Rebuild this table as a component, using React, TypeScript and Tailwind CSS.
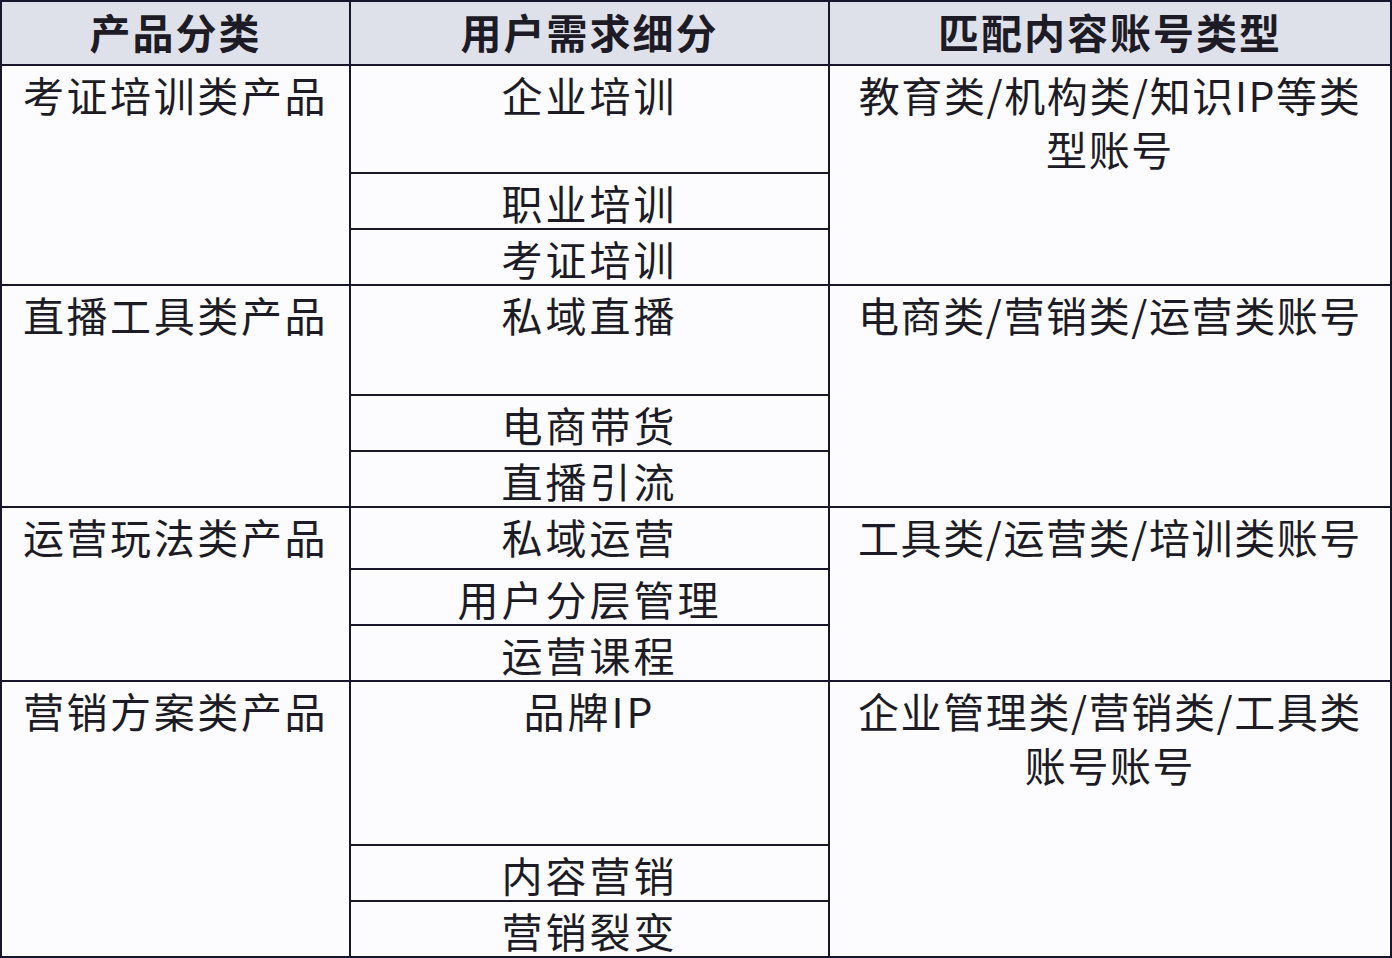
import React from "react";

const font = { fontFamily: '"Noto Sans CJK SC", "Noto Sans", sans-serif' };

type Group = {
  cat: string;
  subs: { text: string; h: number }[];
  match: React.ReactNode;
};

const groups: Group[] = [
  {
    cat: "考证培训类产品",
    subs: [
      { text: "企业培训", h: 108 },
      { text: "职业培训", h: 56 },
      { text: "考证培训", h: 56 },
    ],
    match: (
      <>
        教育类/机构类/知识IP等类
        <br />
        型账号
      </>
    ),
  },
  {
    cat: "直播工具类产品",
    subs: [
      { text: "私域直播", h: 110 },
      { text: "电商带货", h: 56 },
      { text: "直播引流", h: 56 },
    ],
    match: <>电商类/营销类/运营类账号</>,
  },
  {
    cat: "运营玩法类产品",
    subs: [
      { text: "私域运营", h: 62 },
      { text: "用户分层管理", h: 56 },
      { text: "运营课程", h: 56 },
    ],
    match: <>工具类/运营类/培训类账号</>,
  },
  {
    cat: "营销方案类产品",
    subs: [
      { text: "品牌IP", h: 164 },
      { text: "内容营销", h: 56 },
      { text: "营销裂变", h: 56 },
    ],
    match: (
      <>
        企业管理类/营销类/工具类
        <br />
        账号账号
      </>
    ),
  },
];

export default function App() {
  return (
    <div
      className="w-[1392px] h-[958px] overflow-hidden bg-[#fcfcfe] text-[#1d1c26] border-l-2 border-t-2 border-[#17162a]"
      style={font}
    >
      {/* header */}
      <div className="grid grid-cols-[349px_479px_562px] grid-rows-[64px] h-[64px] bg-[#dfe1ea]">
        <div className="flex items-center justify-center pb-[4px] border-r-2 border-b-2 border-[#17162a] text-[41px] leading-none font-bold tracking-[2px]">
          产品分类
        </div>
        <div className="flex items-center justify-center pb-[4px] border-r-2 border-b-2 border-[#17162a] text-[41px] leading-none font-bold tracking-[2px]">
          用户需求细分
        </div>
        <div className="flex items-center justify-center pb-[4px] border-r-2 border-b-2 border-[#17162a] text-[41px] leading-none font-bold tracking-[2px]">
          匹配内容账号类型
        </div>
      </div>
      {groups.map((g) => (
        <div key={g.cat} className="grid grid-cols-[349px_479px_562px]">
          <div className="border-r-2 border-b-2 border-[#17162a] text-center text-[41px] leading-[54px] tracking-[2.6px] pt-[1px]">
            {g.cat}
          </div>
          <div className="flex flex-col">
            {g.subs.map((s) => (
              <div
                key={s.text}
                className="border-r-2 border-b-2 border-[#17162a] text-center text-[41px] leading-[54px] tracking-[3px] pt-[1px]"
                style={{ height: s.h }}
              >
                {s.text}
              </div>
            ))}
          </div>
          <div className="border-r-2 border-b-2 border-[#17162a] text-center text-[41px] leading-[54px] tracking-[1.6px] pt-[1px]">
            {g.match}
          </div>
        </div>
      ))}
    </div>
  );
}
